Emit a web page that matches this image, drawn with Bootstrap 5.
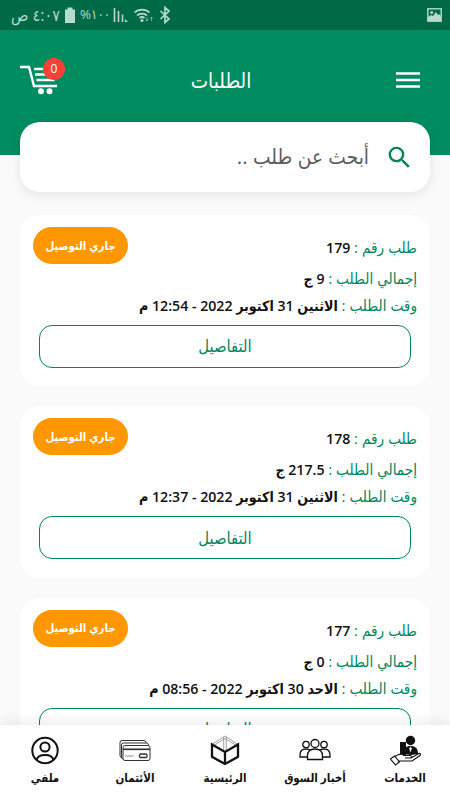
<!DOCTYPE html>
<html lang="ar" dir="rtl">
<head>
<meta charset="utf-8">
<meta name="viewport" content="width=device-width, initial-scale=1">
<title>الطلبات</title>
<link href="https://cdn.jsdelivr.net/npm/bootstrap@5.3.0/dist/css/bootstrap.min.css" rel="stylesheet">
<style>
:root{--brand:#008c5f;--ink:#00855c}
body{height:800px;overflow:hidden;background:#fafafa;font-family:"Open Sans","DejaVu Sans Condensed","DejaVu Sans",sans-serif;color:#111}
.screen{height:800px;overflow:hidden}
.status{height:30px;background:#006946;color:#b4dbcb;padding:0 8px 0 10px;font-size:15px}
.status svg{display:block;flex:none}
.st-time{width:50px;font-size:16px}
.st-pct{width:29px;font-size:13.3px}
.topbar{height:125px;background:var(--brand);color:#fff;padding:30px 30px 0 20px}
.topbar h1{font-size:20.5px;font-weight:400;line-height:40px;padding-right:19px}
.cart{width:45px;height:40px}
.count{top:-2px;left:23px;width:22px;height:22px;background:#f44336;font-size:12px;line-height:22px}
.search{height:70px;margin:-33px 20px 0;border-radius:20px;background:#fff;box-shadow:0 3px 12px rgba(0,0,0,.09);padding:0 16px;font-size:20.7px;color:#5c5c5c}
.orders{padding:23px 20px 0;gap:20px}
.order{height:171.4px;flex:none;border-radius:20px;background:#fff;padding:12px 13px 0;font-size:14.15px;white-space:nowrap}
.order .label{color:var(--ink);font-size:15.2px}
.order .value{font-weight:600}
.line1{height:36px;line-height:40px}
.line2{height:29px;line-height:31px}
.line3{height:26px;line-height:27px}
.state{height:37px;width:95px;border-radius:19px;background:#ff9800;color:#fff;font-size:11.3px;font-weight:600}
.details{height:43px;margin:7px 6px 0;border:1px solid var(--ink);border-radius:13px;color:var(--ink);font-size:16.5px}
.tabs{height:75px;background:#fff;box-shadow:0 -3px 12px rgba(0,0,0,.08);color:#111;font-size:11.5px;font-weight:600}
.tabs svg{display:block;margin:9px auto 0}
.tabs span{line-height:20px;margin-top:2px}
.fit{display:inline-block;white-space:nowrap}
</style>
<script src="https://cdn.jsdelivr.net/npm/bootstrap@5.3.0/dist/js/bootstrap.bundle.min.js"></script>
</head>
<body>
<div class="screen position-relative">
<div class="status d-flex align-items-center justify-content-between">
  <svg width="15" height="14" viewBox="0 0 15 14"><rect x=".8" y=".8" width="13.4" height="12.4" fill="none" stroke="currentColor" stroke-width="1.4"/><circle cx="4.7" cy="4.5" r="1.5" fill="currentColor"/><path d="M1 12V9l3-2 2 1 3-4 2 3 1-1 2 2v5H1z" fill="currentColor"/></svg>
  <div class="d-flex align-items-center" dir="ltr">
    <span class="fit st-time" dir="rtl">٤:٠٧ ص</span>
    <svg width="12" height="18" viewBox="0 0 12 18" class="ms-1"><path d="M3.500 1.500h5v2h2.500V17H1V3.500h2.500z" fill="currentColor"/></svg>
    <span class="fit ms-1 st-pct" dir="ltr">%١٠٠</span>
    <svg width="16" height="18" viewBox="0 0 16 18" class="ms-1"><path d="M1.500 2v14M5.500 5v11M9.500 8.500V16" stroke="currentColor" stroke-width="1.600"/><path d="M12 13l3 3h-3z" fill="currentColor"/></svg>
    <svg width="22" height="18" viewBox="0 0 22 18" class="ms-1"><path d="M1.500 6.500a11 11 0 0 1 15 0M4 9.500a7.500 7.500 0 0 1 10 0M6.500 12a4 4 0 0 1 5 0" fill="none" stroke="currentColor" stroke-width="1.700"/><circle cx="9" cy="14.500" r="1.500" fill="currentColor"/><path d="M14 11v4m-1.500-1.500L14 15l1.500-1.500M18.500 15v-4M17 12.500l1.500-1.500 1.500 1.500" fill="none" stroke="currentColor" opacity=".6"/></svg>
    <svg width="12" height="18" viewBox="0 0 12 18" class="ms-1"><path d="M1.500 5l8.500 8-4 3.500v-15L10 5l-8.500 8" fill="none" stroke="currentColor" stroke-width="1.700"/></svg>
  </div>
</div>
<header class="topbar d-flex justify-content-between align-items-start">
  <svg width="24" height="40" viewBox="0 0 24 40"><path d="M0 13.500h24M0 20h24M0 26.500h24" stroke="#fff" stroke-width="2.700"/></svg>
  <h1 class="m-0"><span class="fit">الطلبات</span></h1>
  <div class="cart position-relative">
    <svg width="45" height="40" viewBox="0 0 45 40" fill="none" stroke="#fff"><path d="M0 7h9l5 19h23" stroke-width="2.400"/><path d="M14 9h16M15 14.500h20M16.500 20h18" stroke-width="2.400"/><circle cx="21" cy="31.300" r="3" fill="#fff" stroke="none"/><circle cx="29.500" cy="31.300" r="3" fill="#fff" stroke="none"/></svg>
    <span class="count position-absolute rounded-circle text-center">0</span>
  </div>
</header>
<div class="search position-relative d-flex align-items-center">
  <svg width="29" height="29" viewBox="0 0 24 24" fill="#00855c"><path d="M15.500 14h-.79l-.28-.27A6.470 6.470 0 0 0 16 9.500 6.500 6.500 0 1 0 9.500 16c1.610 0 3.090-.59 4.230-1.570l.27.28v.79l5 4.990L20.490 19l-4.990-5zm-6 0C7.010 14 5 11.990 5 9.500S7.010 5 9.500 5 14 7.010 14 9.500 11.990 14 9.500 14z"/></svg>
  <span class="fit me-3">أبحث عن طلب ..</span>
</div>
<main class="orders d-flex flex-column">
  <article class="order">
    <div class="line1 d-flex justify-content-between"><div><span class="label">طلب رقم :</span> <span class="value">179</span></div><span class="state d-flex align-items-center justify-content-center"><span class="fit">جاري التوصيل</span></span></div>
    <div class="line2"><span class="label">إجمالي الطلب :</span> <span class="value">9 ج</span></div>
    <div class="line3"><span class="label">وقت الطلب :</span> <span class="value">الاثنين 31 اكتوبر 2022 - 12:54 م</span></div>
    <div class="details d-flex align-items-center justify-content-center">التفاصيل</div>
  </article>
  <article class="order">
    <div class="line1 d-flex justify-content-between"><div><span class="label">طلب رقم :</span> <span class="value">178</span></div><span class="state d-flex align-items-center justify-content-center"><span class="fit">جاري التوصيل</span></span></div>
    <div class="line2"><span class="label">إجمالي الطلب :</span> <span class="value">217.5 ج</span></div>
    <div class="line3"><span class="label">وقت الطلب :</span> <span class="value">الاثنين 31 اكتوبر 2022 - 12:37 م</span></div>
    <div class="details d-flex align-items-center justify-content-center">التفاصيل</div>
  </article>
  <article class="order">
    <div class="line1 d-flex justify-content-between"><div><span class="label">طلب رقم :</span> <span class="value">177</span></div><span class="state d-flex align-items-center justify-content-center"><span class="fit">جاري التوصيل</span></span></div>
    <div class="line2"><span class="label">إجمالي الطلب :</span> <span class="value">0 ج</span></div>
    <div class="line3"><span class="label">وقت الطلب :</span> <span class="value">الاحد 30 اكتوبر 2022 - 08:56 م</span></div>
    <div class="details d-flex align-items-center justify-content-center">التفاصيل</div>
  </article>
</main>
<nav class="tabs position-absolute bottom-0 start-0 end-0 row g-0 text-center">
  <div class="col"><svg width="32" height="32" viewBox="0 0 32 32"><path d="M11 8h6v13h-6z" fill="#111"/><circle cx="21.500" cy="6.500" r="4.700" fill="#111"/><path d="M14 20c0-6 3-8 7.500-8s7.500 2 7.500 8l-7 1z" fill="#111"/><path d="M21.500 12.500l-1.300 2 1.300 4 1.300-4z" fill="#fff"/><path d="M1.500 25l4-3 5 6-4 3zM6 22.500c4-3 7-3 9-1h6c2 0 2 2.500 0 2.500h-5 6l8-4.500c1.500-.5 2 1 1 2L23 27H11l-2 1" fill="#fff" stroke="#111" stroke-width="1.100"/></svg><span class="d-block">الخدمات</span></div>
  <div class="col"><svg width="32" height="32" viewBox="0 0 32 32" fill="#fff" stroke="#111" stroke-width="1.300"><circle cx="7" cy="10.500" r="3.200"/><circle cx="25" cy="10.500" r="3.200"/><path d="M1 23v-2c0-4 2.500-6 6-6s6 2 6 6v2zM19 23v-2c0-4 2.500-6 6-6s6 2 6 6v2z"/><circle cx="16" cy="9.500" r="4"/><path d="M8.500 25.500V22c0-5 3-7 7.500-7s7.500 2 7.500 7v3.500z"/></svg><span class="d-block">أخبار السوق</span></div>
  <div class="col"><svg width="32" height="32" viewBox="0 0 32 32" fill="none"><path d="M3 10.500L16 2l13 8.500M5.500 11L16 4.500 26.500 11M14.700 3v15M17.300 3v15" stroke="#888" stroke-width=".8"/><path d="M3 10.500v12.300L16 30l13-7.200V10.500L16 18zM16 18v12" stroke="#111" stroke-width="2.300"/></svg><span class="d-block">الرئيسية</span></div>
  <div class="col"><svg width="32" height="32" viewBox="0 0 32 32" fill="#fff" stroke="#333" stroke-width="1"><rect x="1" y="6.500" width="26" height="17" rx="2"/><rect x="2.500" y="9" width="27" height="16" rx="2"/><rect x="4" y="11.500" width="27" height="15" rx="2"/><path d="M4 15.300h27" stroke-width="1.700"/><rect x="20.500" y="20" width="7.500" height="3.500" rx="1.200" stroke-width="1.300"/><path d="M6 23l1.500-2 1 2 1.500-2 1 2 1.500-2 1 2 1-2" fill="none" stroke="#999" stroke-width=".8"/></svg><span class="d-block">الأئتمان</span></div>
  <div class="col"><svg width="32" height="32" viewBox="0 0 32 32" fill="none" stroke="#111" stroke-width="2"><circle cx="16" cy="16.500" r="12.700"/><circle cx="16" cy="13" r="4.600"/><path d="M7.500 26c1-4 4.500-5 8.500-5s7.500 1 8.500 5"/></svg><span class="d-block">ملفي</span></div>
</nav>
</div>
</body>
</html>
